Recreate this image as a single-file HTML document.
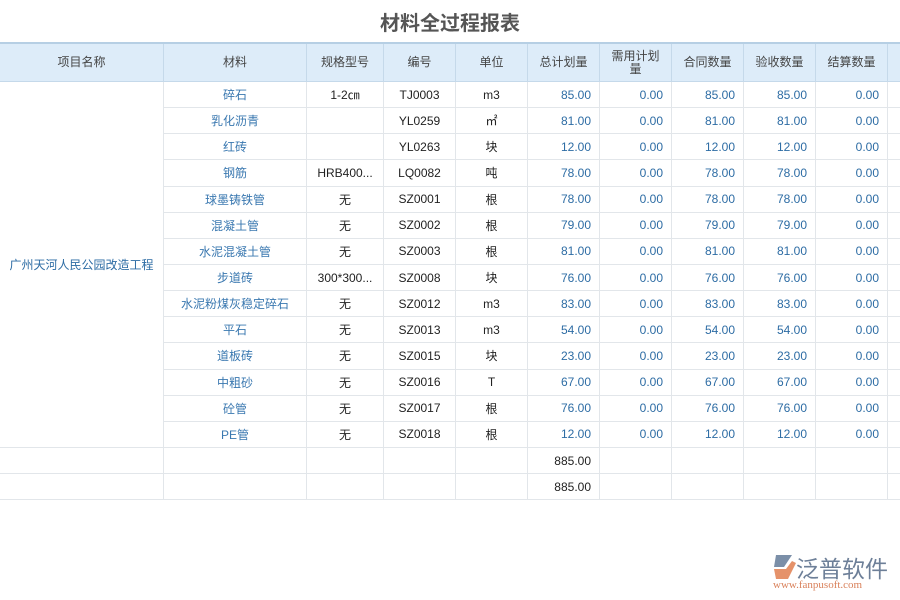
<!DOCTYPE html>
<html><head><meta charset="utf-8"><style>
body{margin:0;width:900px;height:600px;background:#fff;font-family:"Liberation Sans","Noto Sans CJK SC",sans-serif;overflow:hidden;position:relative}
.t{position:absolute;top:7px;left:0;width:900px;text-align:center;font-size:20px;font-weight:bold;color:#555}
table{position:absolute;top:42px;left:-1px;border-collapse:collapse;table-layout:fixed;width:901px;font-size:12px}
td,th{border:1px solid #e2e6ea;padding:0 8px;height:25.15px;white-space:nowrap;overflow:hidden;text-overflow:ellipsis;text-align:center;color:#222}
th{background:#ddecf9;font-weight:normal;color:#444;height:37px;border-color:#c5d9ea;line-height:13px;border-top:2px solid #b6cfe4}
td.b{color:#3a78b0}
td.n{text-align:right;color:#2d6ca4}
td.p{color:#2d6ca4}
.logo{position:absolute;left:770px;top:551px;width:125px;height:40px}
</style></head><body>
<div class="t">材料全过程报表</div>
<table>
<colgroup><col style="width:164px"><col style="width:143px"><col style="width:77px"><col style="width:72px"><col style="width:72px"><col style="width:72px"><col style="width:72px"><col style="width:72px"><col style="width:72px"><col style="width:72px"><col style="width:13px"></colgroup>
<tr><th>项目名称</th><th>材料</th><th>规格型号</th><th>编号</th><th>单位</th><th>总计划量</th><th style="white-space:normal">需用计划<br>量</th><th>合同数量</th><th>验收数量</th><th>结算数量</th><th></th></tr>
<tr><td class="p" rowspan="14">广州天河人民公园改造工程</td><td class="b">碎石</td><td>1-2㎝</td><td>TJ0003</td><td>m3</td><td class="n">85.00</td><td class="n">0.00</td><td class="n">85.00</td><td class="n">85.00</td><td class="n">0.00</td><td></td></tr>
<tr><td class="b">乳化沥青</td><td></td><td>YL0259</td><td>㎡</td><td class="n">81.00</td><td class="n">0.00</td><td class="n">81.00</td><td class="n">81.00</td><td class="n">0.00</td><td></td></tr>
<tr><td class="b">红砖</td><td></td><td>YL0263</td><td>块</td><td class="n">12.00</td><td class="n">0.00</td><td class="n">12.00</td><td class="n">12.00</td><td class="n">0.00</td><td></td></tr>
<tr><td class="b">钢筋</td><td>HRB400...</td><td>LQ0082</td><td>吨</td><td class="n">78.00</td><td class="n">0.00</td><td class="n">78.00</td><td class="n">78.00</td><td class="n">0.00</td><td></td></tr>
<tr><td class="b">球墨铸铁管</td><td>无</td><td>SZ0001</td><td>根</td><td class="n">78.00</td><td class="n">0.00</td><td class="n">78.00</td><td class="n">78.00</td><td class="n">0.00</td><td></td></tr>
<tr><td class="b">混凝土管</td><td>无</td><td>SZ0002</td><td>根</td><td class="n">79.00</td><td class="n">0.00</td><td class="n">79.00</td><td class="n">79.00</td><td class="n">0.00</td><td></td></tr>
<tr><td class="b">水泥混凝土管</td><td>无</td><td>SZ0003</td><td>根</td><td class="n">81.00</td><td class="n">0.00</td><td class="n">81.00</td><td class="n">81.00</td><td class="n">0.00</td><td></td></tr>
<tr><td class="b">步道砖</td><td>300*300...</td><td>SZ0008</td><td>块</td><td class="n">76.00</td><td class="n">0.00</td><td class="n">76.00</td><td class="n">76.00</td><td class="n">0.00</td><td></td></tr>
<tr><td class="b">水泥粉煤灰稳定碎石</td><td>无</td><td>SZ0012</td><td>m3</td><td class="n">83.00</td><td class="n">0.00</td><td class="n">83.00</td><td class="n">83.00</td><td class="n">0.00</td><td></td></tr>
<tr><td class="b">平石</td><td>无</td><td>SZ0013</td><td>m3</td><td class="n">54.00</td><td class="n">0.00</td><td class="n">54.00</td><td class="n">54.00</td><td class="n">0.00</td><td></td></tr>
<tr><td class="b">道板砖</td><td>无</td><td>SZ0015</td><td>块</td><td class="n">23.00</td><td class="n">0.00</td><td class="n">23.00</td><td class="n">23.00</td><td class="n">0.00</td><td></td></tr>
<tr><td class="b">中粗砂</td><td>无</td><td>SZ0016</td><td>T</td><td class="n">67.00</td><td class="n">0.00</td><td class="n">67.00</td><td class="n">67.00</td><td class="n">0.00</td><td></td></tr>
<tr><td class="b">砼管</td><td>无</td><td>SZ0017</td><td>根</td><td class="n">76.00</td><td class="n">0.00</td><td class="n">76.00</td><td class="n">76.00</td><td class="n">0.00</td><td></td></tr>
<tr><td class="b">PE管</td><td>无</td><td>SZ0018</td><td>根</td><td class="n">12.00</td><td class="n">0.00</td><td class="n">12.00</td><td class="n">12.00</td><td class="n">0.00</td><td></td></tr>
<tr><td></td><td></td><td></td><td></td><td></td><td class="n" style="color:#222">885.00</td><td></td><td></td><td></td><td></td><td></td></tr>
<tr><td></td><td></td><td></td><td></td><td></td><td class="n" style="color:#222">885.00</td><td></td><td></td><td></td><td></td><td></td></tr>
</table>
<div class="logo">
<svg width="28" height="28" viewBox="0 0 28 28" style="position:absolute;left:0;top:2px"><path d="M6 2h16l-8 12H4z" fill="#7b8fa8"/><path d="M4 16h12l6-8 4 2-8 16H6z" fill="#e5926a"/></svg>
<div style="position:absolute;left:26px;top:-1px;font-size:23px;color:#6d7f98">泛普软件</div>
<div style="position:absolute;left:3px;top:28px;font-size:11px;color:#d9805a;font-family:'Liberation Serif',serif">www.fanpusoft.com</div>
</div>
</body></html>
